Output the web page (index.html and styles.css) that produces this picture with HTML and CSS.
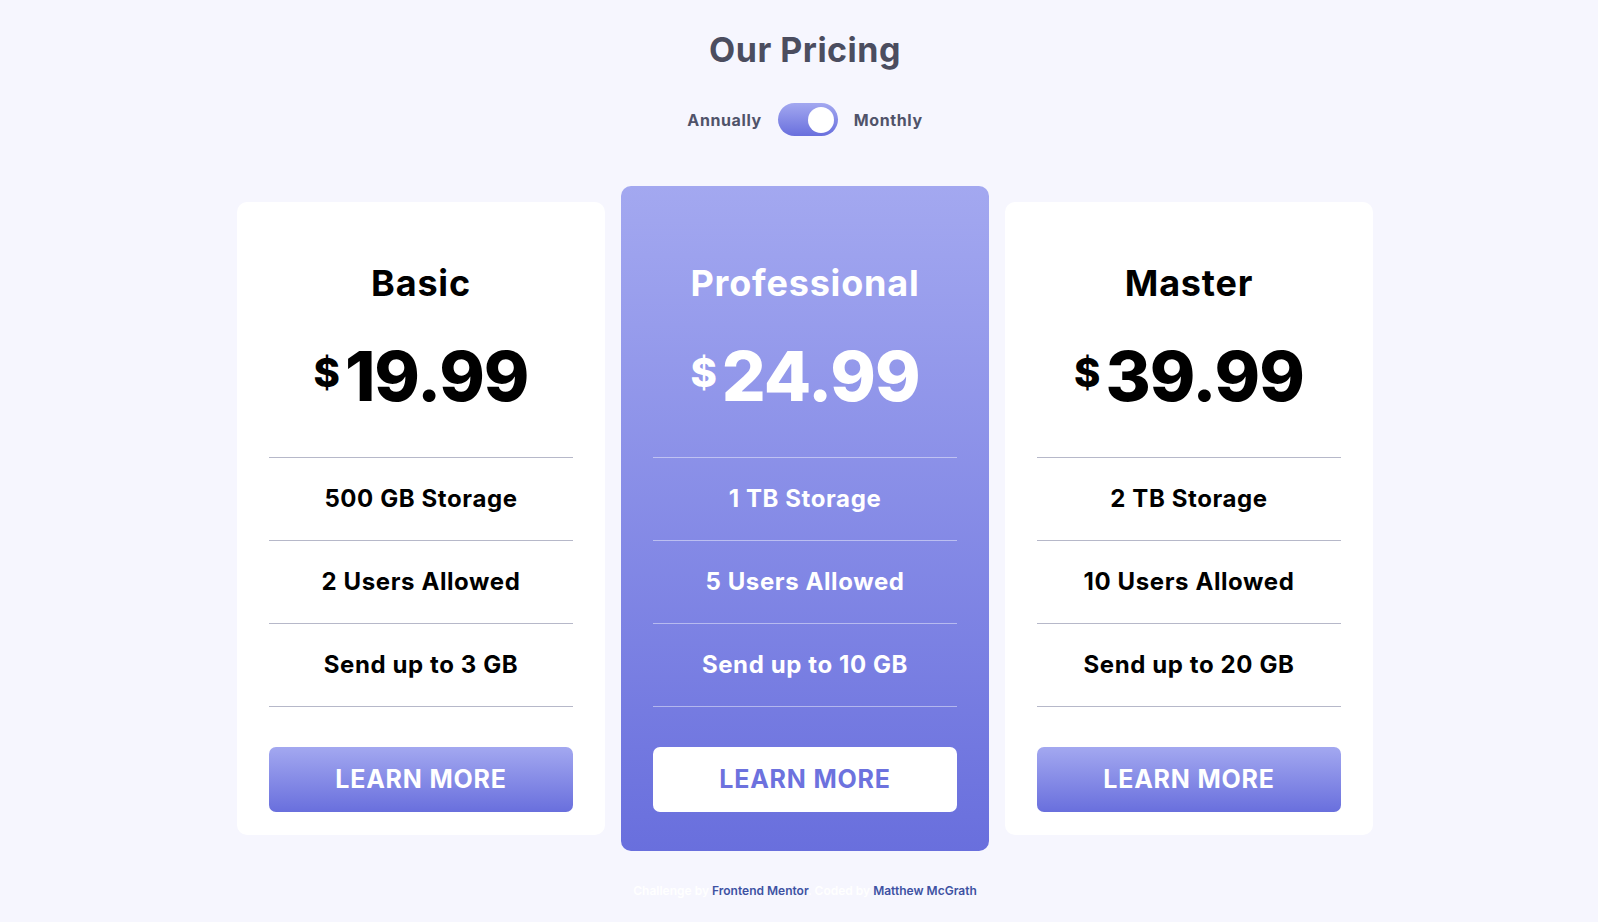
FILE: index.html
```html
<!DOCTYPE html>
<html lang="en">
<head>
<meta charset="utf-8">
<title>Pricing</title>
<link rel="stylesheet" href="styles.css">
</head>
<body>
<main class="page">
  <h1 class="title">Our Pricing</h1>
  <div class="switch-row">
    <span class="switch-label">Annually</span>
    <span class="switch"><span class="knob"></span></span>
    <span class="switch-label">Monthly</span>
  </div>
  <section class="cards">
    <article class="card">
      <h2 class="plan">Basic</h2>
      <p class="price"><span class="cur">$</span>19.99</p>
      <ul class="features">
        <li>500 GB Storage</li>
        <li>2 Users Allowed</li>
        <li>Send up to 3 GB</li>
      </ul>
      <a class="btn" href="#">LEARN MORE</a>
    </article>
    <article class="card card-featured">
      <h2 class="plan">Professional</h2>
      <p class="price"><span class="cur">$</span>24.99</p>
      <ul class="features">
        <li>1 TB Storage</li>
        <li>5 Users Allowed</li>
        <li>Send up to 10 GB</li>
      </ul>
      <a class="btn" href="#">LEARN MORE</a>
    </article>
    <article class="card">
      <h2 class="plan">Master</h2>
      <p class="price"><span class="cur">$</span>39.99</p>
      <ul class="features">
        <li>2 TB Storage</li>
        <li>10 Users Allowed</li>
        <li>Send up to 20 GB</li>
      </ul>
      <a class="btn" href="#">LEARN MORE</a>
    </article>
  </section>
  <footer class="attribution">
    Challenge by <a href="#">Frontend Mentor</a>. Coded by <a href="#">Matthew McGrath</a>
  </footer>
</main>
</body>
</html>
```
FILE: styles.css
```css
* { box-sizing: border-box; }
html, body { margin: 0; padding: 0; }
body {
  background: #f6f6fe;
  font-family: Inter, "Open Sans", "Liberation Sans", sans-serif;
  font-weight: 700;
  color: #000;
}
.page {
  display: flex;
  flex-direction: column;
  align-items: center;
  padding-left: 12px;
  min-height: 922px;
}
.title {
  margin: 30px 0 0;
  font-size: 34px;
  line-height: 40px;
  letter-spacing: 0.5px;
  font-weight: 700;
  color: #4b4d5f;
}
.switch-row {
  display: flex;
  align-items: center;
  gap: 16px;
  margin-top: 33px;
  height: 33px;
}
.switch-label {
  font-size: 16px;
  letter-spacing: 0.6px;
  color: #50536a;
}
.switch {
  width: 60px;
  height: 33px;
  border-radius: 17px;
  background: linear-gradient(to bottom, #a3a8f0, #696fdd);
  display: flex;
  align-items: center;
  justify-content: flex-end;
  padding: 0 4px;
}
.knob {
  width: 26px;
  height: 26px;
  border-radius: 50%;
  background: #fff;
}
.cards {
  display: flex;
  align-items: center;
  gap: 16px;
  margin-top: 50px;
}
.card {
  width: 368px;
  background: #fff;
  border-radius: 10px;
  padding: 59px 32px 23px;
  text-align: center;
  color: #000;
}
.card-featured {
  padding-top: 75px;
  padding-bottom: 39px;
  background: linear-gradient(to bottom, #a3a8f0, #696fdd);
  color: #fff;
}
.plan {
  margin: 0;
  font-size: 36px;
  line-height: 44px;
  letter-spacing: 0.8px;
  font-weight: 700;
}
.price {
  margin: 31px 0 0;
  height: 80px;
  font-size: 69px;
  line-height: 80px;
  font-weight: 800;
  letter-spacing: -1px;
  display: flex;
  justify-content: center;
  align-items: center;
}
.cur {
  font-size: 40px;
  margin-right: 6px;
  margin-top: -6px;
}
.features {
  list-style: none;
  margin: 41px 0 0;
  padding: 0;
  border-top: 1px solid #b6b8c9;
}
.features li {
  height: 83px;
  display: flex;
  align-items: center;
  justify-content: center;
  padding-bottom: 2px;
  border-bottom: 1px solid #b6b8c9;
  font-size: 24px;
  letter-spacing: 0.6px;
}
.card-featured .features,
.card-featured .features li {
  border-color: rgba(255, 255, 255, 0.45);
}
.btn {
  display: flex;
  align-items: center;
  justify-content: center;
  margin-top: 40px;
  height: 65px;
  padding-bottom: 2px;
  border-radius: 7px;
  background: linear-gradient(to bottom, #a3a8f0, #696fdd);
  color: #fff;
  font-size: 25px;
  letter-spacing: 0.8px;
  text-decoration: none;
}
.card-featured .btn {
  background: #fff;
  color: #6d72de;
}
.attribution {
  margin-top: 32px;
  font-size: 12px;
  letter-spacing: 0;
  font-weight: 600;
  color: #fff;
}
.attribution a {
  color: #3e52a3;
  text-decoration: none;
}
```
